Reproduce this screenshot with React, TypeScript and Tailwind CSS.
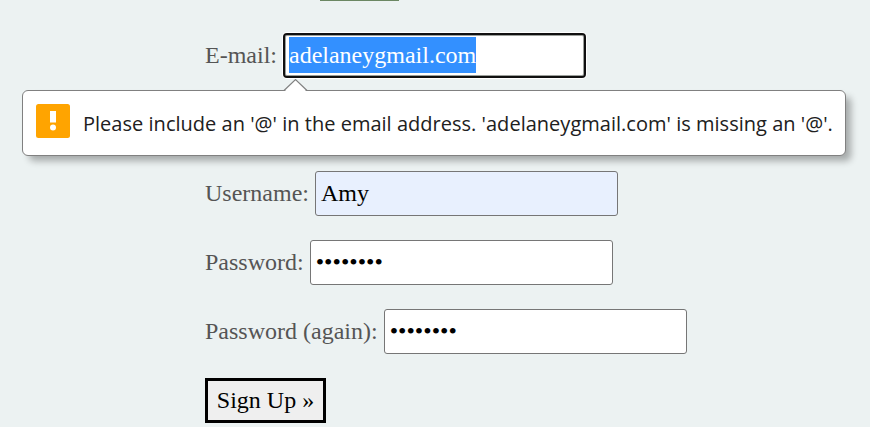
import type { ReactNode } from 'react';

function Row({ label, children }: { label: string; children: ReactNode }) {
  return (
    <div className="flex h-[45px] items-center">
      <span className="mr-1.5 pb-0.5 whitespace-pre">{label}</span>
      {children}
    </div>
  );
}

function Field({ value, className }: { value: string; className: string }) {
  return (
    <div
      className={`flex h-[45px] w-[303px] items-center rounded-[3px] border border-[#767676] pb-0.5 pl-[5px] text-black ${className}`}
    >
      {value}
    </div>
  );
}

function ValidationBubble() {
  return (
    <div className="absolute top-[90px] left-[22px] flex h-[66px] w-[824px] items-start rounded-md border border-[#808080] bg-white pt-[13px] pl-[13px] shadow-[6px_6px_7px_-1px_rgba(0,0,0,0.3)]">
      <svg className="absolute top-[-12px] left-[260px]" width="26" height="13" viewBox="0 0 26 13">
        <path d="M1 13 L12.5 1 L24 13 Z" fill="#fff" />
        <path d="M1 11.5 L12.5 .5 L24 11.5" fill="none" stroke="#808080" strokeWidth="1.1" />
      </svg>
      <svg className="shrink-0" width="34" height="34" viewBox="0 0 34 34">
        <rect width="34" height="34" rx="2.5" fill="#ffa400" />
        <rect x="14" y="7" width="6" height="11.5" fill="#fff" />
        <circle cx="17" cy="23.5" r="3" fill="#fff" />
      </svg>
      <span className="ml-[13px] font-['Open_Sans',sans-serif] text-[20px] leading-[40px] tracking-[0.02px] whitespace-nowrap text-[#202020]">
        Please include an '@' in the email address. 'adelaneygmail.com' is missing an '@'.
      </span>
    </div>
  );
}

export default function App() {
  return (
    <main className="relative h-[427px] w-[870px] overflow-hidden bg-[#ecf2f2] font-['Liberation_Serif',serif] text-[24px] leading-[36px] text-[#555]">
      <div className="ml-[320px] h-px w-[79px] bg-[#6b8763]" />
      <form className="flex flex-col items-start pt-8 pl-[205px]">
        <Row label="E-mail:">
          <div className="flex h-[45px] w-[303px] items-center rounded-[4px] border-2 border-[#101010] bg-white pb-0.5 pl-1 text-white shadow-[0_0_0_1px_#fff,inset_0_0_0_1px_#9b9f9b]">
            <span className="h-9 bg-[#3390ff]">adelaneygmail.com</span>
          </div>
        </Row>
        <div className="mt-[93px] flex flex-col items-start gap-6">
          <Row label="Username:">
            <Field value="Amy" className="bg-[#e8f0fe]" />
          </Row>
          <Row label="Password:">
            <Field value="••••••••" className="bg-white" />
          </Row>
          <Row label="Password (again):">
            <Field value="••••••••" className="bg-white" />
          </Row>
          <button
            type="button"
            className="flex h-[45px] w-[121px] items-center justify-center border-[3px] border-black bg-[#efefef] pb-0.5 whitespace-nowrap text-black"
          >
            Sign Up »
          </button>
        </div>
      </form>
      <ValidationBubble />
    </main>
  );
}
